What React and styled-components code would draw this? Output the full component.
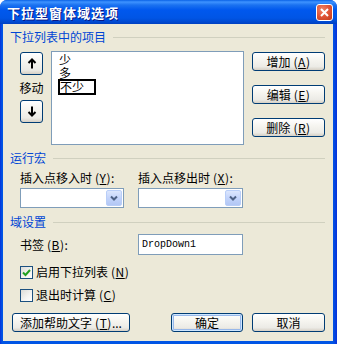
import React from 'react'
import styled, { createGlobalStyle } from 'styled-components'

const Global = createGlobalStyle`
  html, body {
    margin: 0;
    padding: 0;
    background: #ffffff;
    overflow: hidden;
  }
  body {
    font-family: "Noto Sans CJK SC", "Liberation Sans", sans-serif;
    font-size: 12px;
    color: #000;
  }
`

const Window = styled.div`
    width: 337px;
    height: 344px;
    display: flex;
    flex-direction: column;
    background: linear-gradient(to right, #0831D9 0px, #0055E5 2px, #0055E5 333px, #0831D9 337px);
    border-radius: 7px 7px 0 0;
    overflow: hidden;
`

const TitleBar = styled.div`
    height: 24px;
    flex: none;
    display: flex;
    align-items: center;
    justify-content: space-between;
    padding: 0 4px 0 7px;
    background: linear-gradient(to bottom, #0A62E6 0px, #3E93FF 2px, #1B72F0 5px, #0058EE 10px, #0055E5 18px, #0049D0 22px, #0040C0 24px);

    .title{
        color: #fff;
        font-size: 13px;
        font-weight: bold;
        letter-spacing: 1px;
        text-shadow: 1px 1px #0A1883;
    }
`

const CloseButton = styled.div`
    width: 17px;
    height: 17px;
    box-sizing: border-box;
    border: 1px solid #ffffff;
    border-radius: 3px;
    background: radial-gradient(circle at 35% 30%, #F08466 0%, #E2573A 45%, #C23B1A 100%);
    display: flex;
    align-items: center;
    justify-content: center;
`

const Body = styled.div`
    flex: 1;
    margin: 0 4px 3px 3px;
    background: #ECE9D8;
    padding: 6px 8px 0 7px;
    display: flex;
    flex-direction: column;
`

const SectionHeader = styled.div`
    display: flex;
    align-items: center;
    gap: 7px;
    height: 14px;
    line-height: 14px;
    color: #0046D5;
    margin-top: ${p => p.$top || 0}px;

    &::after{
        content: '';
        flex: 1;
        border-top: 1px solid #D0D0BF;
    }
`

const ItemsRow = styled.div`
    display: flex;
    margin-top: 7px;
    padding-left: 10px;
    gap: 8px;
    height: 94px;
`

const MoveColumn = styled.div`
    width: 23px;
    display: flex;
    flex-direction: column;
    align-items: center;
    padding-top: 1px;

    .label{
        white-space: nowrap;
        line-height: 14px;
        margin: 6px 0 5px;
    }
`

const XPButton = styled.div`
    box-sizing: border-box;
    width: ${p => p.$w}px;
    height: ${p => p.$h || 19}px;
    border: 1px solid #003C74;
    border-radius: 3px;
    background: linear-gradient(to bottom, #FFFFFF 0%, #F6F5F0 40%, #ECEBE6 80%, #D6D0C5 100%);
    box-shadow: ${p => p.$default ? 'inset 0 0 0 1px #CEE7FF, inset 0 0 0 2px #98B8EA' : 'none'};
    display: flex;
    align-items: center;
    justify-content: center;
    white-space: nowrap;
    line-height: 14px;
    flex: none;
`

const ListBox = styled.div`
    box-sizing: border-box;
    width: 193px;
    height: 94px;
    background: #fff;
    border: 1px solid #7F9DB9;
    padding: 1px 0 0 6px;
    display: flex;
    flex-direction: column;
    align-items: flex-start;
`

const ListItem = styled.div`
    height: 13px;
    line-height: 13px;
    padding-left: 1px;
    box-sizing: border-box;
    ${p => p.$focus && `
        height: 16px;
        border: 2px solid #000;
        padding: 0 10px 0 0;
        line-height: 12px;
    `}
`

const SideButtons = styled.div`
    display: flex;
    flex-direction: column;
    gap: 14px;
    padding-top: 1px;
`

const Key = styled.span`
    margin-left: 3px;
    letter-spacing: 0.5px;
    u{ text-decoration: underline; }
`

const FieldGrid = styled.div`
    display: grid;
    grid-template-columns: 104px 105px;
    column-gap: 14px;
    padding-left: 10px;
    margin-top: ${p => p.$top || 0}px;
    align-items: center;
`

const Label = styled.div`
    line-height: 14px;
    white-space: nowrap;
`

const Combo = styled.div`
    box-sizing: border-box;
    height: 20px;
    margin-top: 3px;
    background: #fff;
    border: 1px solid #7F9DB9;
    display: flex;
    justify-content: flex-end;
    padding: 1px;
`

const DropButton = styled.div`
    box-sizing: border-box;
    width: 16px;
    height: 16px;
    border: 1px solid #B9CEF8;
    border-radius: 2px;
    background: linear-gradient(to bottom, #DCE6FD 0%, #C3D4FB 50%, #B2C7F5 100%);
    display: flex;
    align-items: center;
    justify-content: center;
`

const TextBox = styled.div`
    box-sizing: border-box;
    height: 21px;
    background: #fff;
    border: 1px solid #7F9DB9;
    padding-left: 3px;
    font-family: "Liberation Mono", monospace;
    font-size: 10px;
    line-height: 19px;
`

const CheckRow = styled.div`
    display: flex;
    align-items: center;
    gap: 3px;
    height: 14px;
    padding-left: 10px;
    margin-top: ${p => p.$top}px;
`

const CheckBox = styled.div`
    box-sizing: border-box;
    width: 13px;
    height: 13px;
    border: 1px solid #1C5180;
    background: linear-gradient(135deg, #DCDCD7 0%, #F5F5F2 60%, #FFFFFF 100%);
    display: flex;
    align-items: center;
    justify-content: center;
`

const BottomRow = styled.div`
    display: flex;
    margin-top: 11px;
    padding-left: 2px;
    gap: 9px;

    .push{
        margin-left: auto;
    }
`

function Mnemonic({ k }) {
    return <Key>(<u>{k}</u>)</Key>
}

function Arrow({ down }) {
    return (
        <svg width="10" height="11" viewBox="0 0 10 11" style={{ transform: down ? 'rotate(180deg)' : 'none' }}>
            <path d="M5 1.5 V10.5 M1.5 5 L5 1.5 L8.5 5" stroke="#000" strokeWidth="2" fill="none" />
        </svg>
    )
}

function Chevron() {
    return (
        <svg width="8" height="6" viewBox="0 0 8 6">
            <path d="M1 1.5 L4 4.5 L7 1.5" stroke="#4D6185" strokeWidth="2" fill="none" />
        </svg>
    )
}

function Check() {
    return (
        <svg width="9" height="9" viewBox="0 0 9 9">
            <path d="M1 4.5 L3.5 7 L8 2" stroke="#21A121" strokeWidth="2" fill="none" />
        </svg>
    )
}

export default function App() {
    return (
        <>
            <Global />
            <Window>
                <TitleBar>
                    <span className='title'>下拉型窗体域选项</span>
                    <CloseButton>
                        <svg width="9" height="9" viewBox="0 0 9 9">
                            <path d="M1 1 L8 8 M8 1 L1 8" stroke="#fff" strokeWidth="2" />
                        </svg>
                    </CloseButton>
                </TitleBar>
                <Body>
                    <SectionHeader>下拉列表中的项目</SectionHeader>
                    <ItemsRow>
                        <MoveColumn>
                            <XPButton $w={23} $h={23}><Arrow /></XPButton>
                            <div className='label'>移动</div>
                            <XPButton $w={23} $h={23}><Arrow down /></XPButton>
                        </MoveColumn>
                        <ListBox>
                            <ListItem>少</ListItem>
                            <ListItem>多</ListItem>
                            <ListItem $focus>不少</ListItem>
                        </ListBox>
                        <SideButtons>
                            <XPButton $w={73}>增加<Mnemonic k="A" /></XPButton>
                            <XPButton $w={73}>编辑<Mnemonic k="E" /></XPButton>
                            <XPButton $w={73}>删除<Mnemonic k="R" /></XPButton>
                        </SideButtons>
                    </ItemsRow>

                    <SectionHeader $top={6}>运行宏</SectionHeader>
                    <FieldGrid $top={6}>
                        <Label>插入点移入时<Mnemonic k="Y" />:</Label>
                        <Label>插入点移出时<Mnemonic k="X" />:</Label>
                        <Combo><DropButton><Chevron /></DropButton></Combo>
                        <Combo><DropButton><Chevron /></DropButton></Combo>
                    </FieldGrid>

                    <SectionHeader $top={7}>域设置</SectionHeader>
                    <FieldGrid $top={5}>
                        <Label>书签<Mnemonic k="B" />:</Label>
                        <TextBox>DropDown1</TextBox>
                    </FieldGrid>

                    <CheckRow $top={10}>
                        <CheckBox><Check /></CheckBox>
                        <Label>启用下拉列表<Mnemonic k="N" /></Label>
                    </CheckRow>
                    <CheckRow $top={9}>
                        <CheckBox />
                        <Label>退出时计算<Mnemonic k="C" /></Label>
                    </CheckRow>

                    <BottomRow>
                        <XPButton $w={118}>添加帮助文字<Mnemonic k="T" />...</XPButton>
                        <XPButton $w={72} $default className='push'>确定</XPButton>
                        <XPButton $w={73}>取消</XPButton>
                    </BottomRow>
                </Body>
            </Window>
        </>
    )
}
